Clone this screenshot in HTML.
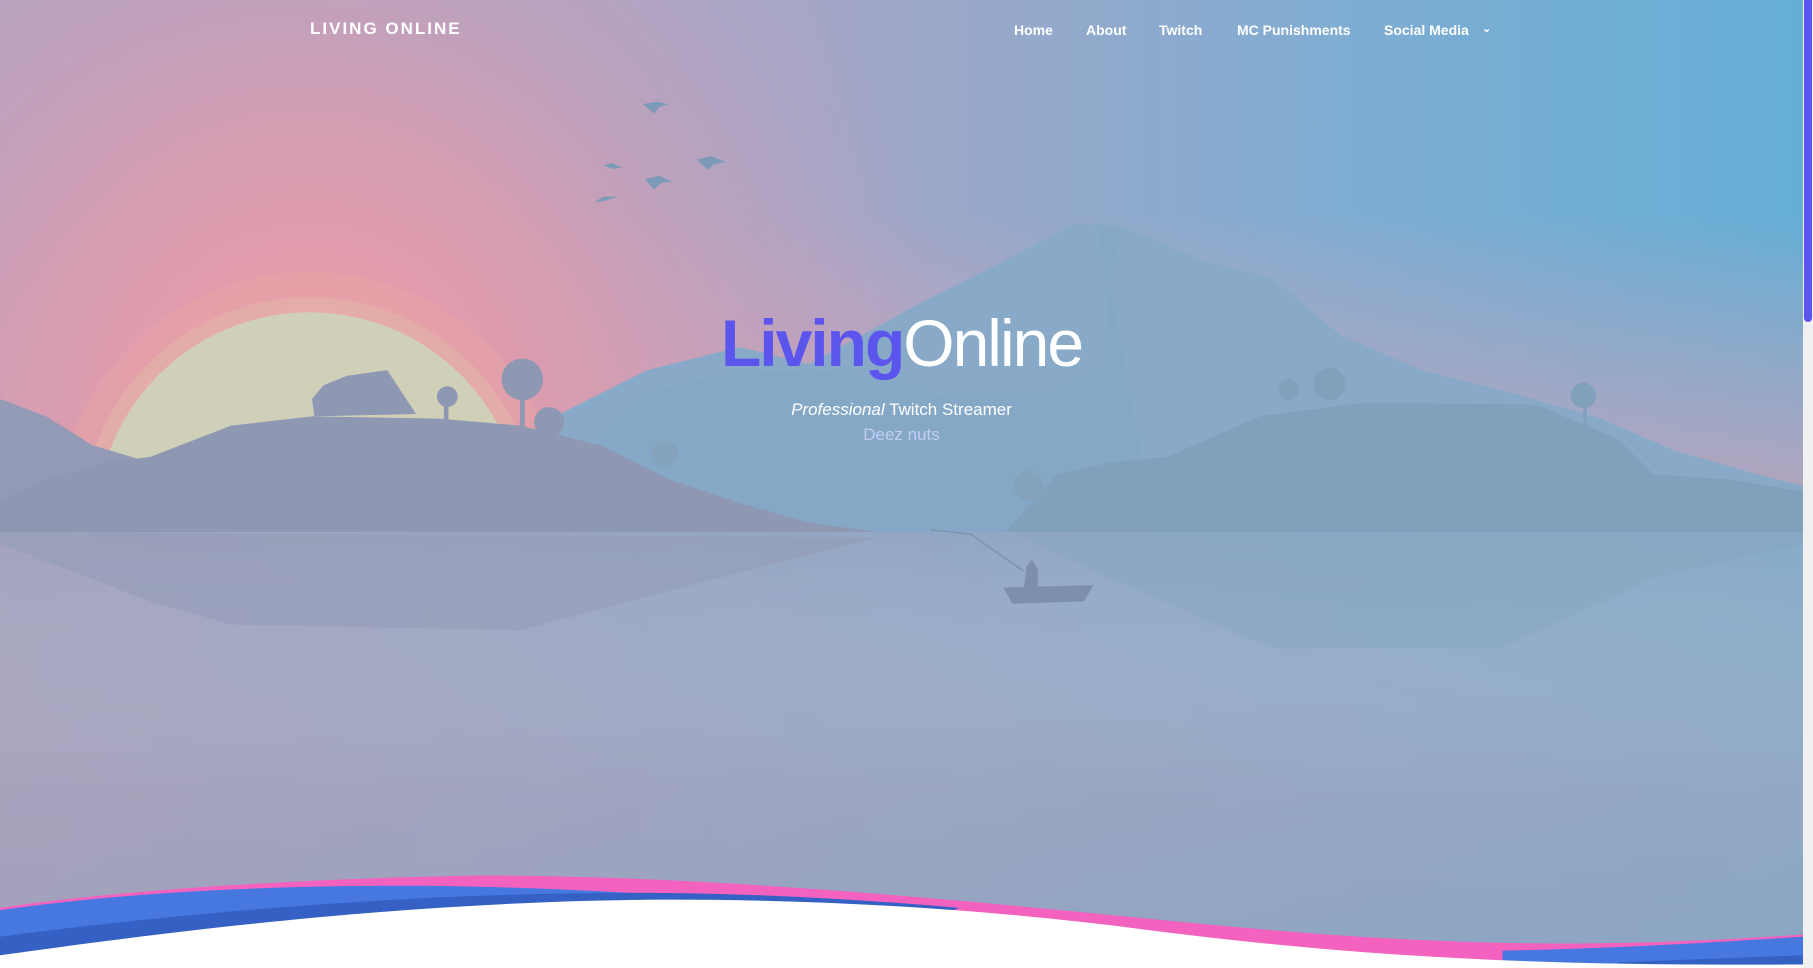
<!DOCTYPE html>
<html><head><meta charset="utf-8"><style>
html,body{margin:0;padding:0;width:1813px;height:968px;overflow:hidden;font-family:"Liberation Sans",sans-serif;}
.scene{position:absolute;left:0;top:0;width:1803px;height:968px;}
.sb{position:absolute;left:1803px;top:0;width:10px;height:968px;background:#f1f1f1;}
.sb div{position:absolute;left:1px;top:0;width:8px;height:322px;background:#5b55ee;border-radius:0 0 4px 4px;}
.logo{position:absolute;left:310px;top:19px;color:#fff;font-weight:bold;font-size:17px;letter-spacing:2px;}
.nav{position:absolute;top:22px;color:#fff;font-weight:bold;font-size:14px;}
.title{position:absolute;left:0;width:1803px;top:303px;text-align:center;font-size:66px;letter-spacing:-2px;line-height:80px;}
.title b{color:#5b55ee;font-weight:bold}
.title span{color:#fff;}
.sub{position:absolute;left:0;width:1803px;text-align:center;font-size:17px;color:#fff;}
</style></head><body>
<svg class="scene" viewBox="0 0 1560 837" preserveAspectRatio="none" xmlns="http://www.w3.org/2000/svg">
<defs>
<linearGradient id="sky" x1="0" y1="0" x2="1" y2="0">
<stop offset="0" stop-color="#b1a4c2"/><stop offset="0.45" stop-color="#a4a6c6"/><stop offset="0.75" stop-color="#7fadd2"/><stop offset="1" stop-color="#64aed6"/>
</linearGradient>
<linearGradient id="band" x1="0" y1="0" x2="0" y2="1">
<stop offset="0" stop-color="#e4a0b0" stop-opacity="0"/><stop offset="0.4" stop-color="#e4a0b0" stop-opacity="0"/><stop offset="0.9" stop-color="#e0a0b0" stop-opacity="0.6"/><stop offset="1" stop-color="#e0a0b0" stop-opacity="0.6"/>
</linearGradient>
<radialGradient id="glow" cx="270" cy="340" r="560" gradientUnits="userSpaceOnUse">
<stop offset="0" stop-color="#f09aa4"/><stop offset="0.4" stop-color="#dc9cae" stop-opacity="0.85"/><stop offset="1" stop-color="#c0a0c0" stop-opacity="0"/>
</radialGradient>
<linearGradient id="water" x1="0" y1="0" x2="1" y2="0">
<stop offset="0" stop-color="#a3a2bd"/><stop offset="0.5" stop-color="#93a7c4"/><stop offset="1" stop-color="#86aac8"/>
</linearGradient>
<linearGradient id="waterv" x1="0" y1="0" x2="0" y2="1">
<stop offset="0" stop-color="#fff" stop-opacity="0"/><stop offset="0.6" stop-color="#b5a2bb" stop-opacity="0.25"/><stop offset="1" stop-color="#9a9ab5" stop-opacity="0.2"/>
</linearGradient>
<clipPath id="c"><rect width="1560" height="460"/></clipPath>
</defs>
<rect width="1560" height="837" fill="url(#sky)"/>
<rect width="1560" height="460" fill="url(#band)"/>
<rect width="1560" height="460" fill="url(#glow)"/>
<g clip-path="url(#c)">
<circle cx="268" cy="455" r="220" fill="#e8a6a6" opacity="0.45"/>
<circle cx="268" cy="455" r="198" fill="#e2b4a8" opacity="0.6"/>
<circle cx="268" cy="455" r="185" fill="#d0d0b8"/>
</g>
<!-- mountain -->
<path d="M480,360 L560,320 L640,300 L700,315 L800,260 L860,230 L930,193 L970,195 L1040,225 L1100,240 L1160,290 L1230,320 L1290,335 L1380,360 L1450,390 L1520,410 L1560,420 L1560,460 L480,460Z" fill="#88aac8"/>
<path d="M950,195 L970,200 L960,240 L955,320 L900,345 L820,345 L780,330 L700,320 L620,325 L560,340 L520,380 L500,400 L480,460 L1000,460Z" fill="#84a6c4" opacity="0.6"/>
<!-- left hill -->
<path d="M0,345 L40,360 L80,385 L130,400 L140,460 L0,460Z" fill="#939ab5"/>
<!-- left island -->
<path d="M0,432 L40,415 L90,400 L130,395 L200,368 L270,360 L380,362 L450,368 L520,385 L580,415 L640,435 L700,452 L760,460 L0,460Z" fill="#8f98b2"/>
<path d="M272,360 L270,345 L280,333 L300,325 L335,320 L360,358Z" fill="#8f98b2"/>
<rect x="384" y="340" width="4" height="25" fill="#8f98b2"/><circle cx="387" cy="343" r="9" fill="#8f98b2"/>
<rect x="450" y="330" width="4" height="40" fill="#8f98b2"/><circle cx="452" cy="328" r="18" fill="#8f98b2"/>
<circle cx="475" cy="365" r="13" fill="#8f98b2"/>
<!-- right island -->
<path d="M870,460 L915,410 L960,400 L1010,395 L1090,360 L1180,348 L1330,350 L1400,380 L1430,410 L1500,415 L1560,425 L1560,460Z" fill="#80a0bb"/>
<rect x="1370" y="340" width="3" height="30" fill="#80a0bb"/><circle cx="1370" cy="342" r="11" fill="#80a0bb"/>
<circle cx="1150" cy="332" r="14" fill="#80a0bb"/><circle cx="1115" cy="337" r="9" fill="#80a0bb"/>
<circle cx="890" cy="420" r="13" fill="#85a2bd"/><circle cx="575" cy="392" r="11" fill="#85a2bd"/>
<!-- birds -->
<g fill="#7b9ab8"><path d="M556,90 L568,88 L578,90 L570,93 L566,98Z"/><path d="M603,138 L615,135 L628,140 L618,142 L612,147Z"/><path d="M558,155 L570,152 L582,157 L572,158 L566,164Z"/><path d="M522,143 L530,141 L538,145 L530,146Z"/><path d="M514,175 L522,170 L535,170 L522,174Z"/></g>
<!-- water -->
<rect y="460" width="1560" height="377" fill="url(#water)"/>
<rect y="460" width="1560" height="377" fill="url(#waterv)"/>
<path d="M0,470 L130,520 L200,540 L450,545 L620,500 L760,465 L0,460Z" fill="#959cb7" opacity="0.6"/>
<path d="M880,462 L960,500 L1100,560 L1300,560 L1430,500 L1560,470 L1560,460Z" fill="#86a5c0" opacity="0.5"/>
<!-- boat -->
<path d="M868,508 L946,506 L938,520 L876,522Z" fill="#7d8fad"/>
<path d="M886,508 L888,490 L893,484 L898,492 L898,508Z" fill="#7d8fad"/>
<path d="M886,494 L840,462 L805,458" stroke="#7d8fad" stroke-width="1.2" fill="none"/>
<!-- waves -->
<path d="M0,785 C100,770 250,760 415,757 C600,757 800,775 1000,795 C1200,815 1350,823 1560,808 L1560,837 L0,837Z" fill="#f462bf"/>
<path d="M0,787 C120,770 250,765 380,766 C500,768 600,775 700,782 L1000,837 L0,837Z" fill="#4678e0"/>
<path d="M1300,822 C1400,820 1480,815 1560,810 L1560,837 L1300,837Z" fill="#4678e0"/>
<path d="M0,810 C150,790 350,772 550,772 C650,772 750,778 830,785 L700,837 L0,837Z" fill="#3561c4"/>
<path d="M1400,832 L1560,826 L1560,837 L1400,837Z" fill="#3561c4"/>
<path d="M0,826 C150,805 350,780 560,778 C700,777 850,785 1000,805 C1200,830 1350,835 1560,834 L1560,837 L0,837Z" fill="#fff"/>
</svg>
<div class="sb"><div></div></div>
<div class="logo">LIVING ONLINE</div>
<div class="nav" style="left:1014px">Home</div>
<div class="nav" style="left:1086px">About</div>
<div class="nav" style="left:1159px">Twitch</div>
<div class="nav" style="left:1237px">MC Punishments</div>
<div class="nav" style="left:1384px">Social Media</div>
<div class="nav" style="left:1482px;font-size:11px;top:22px">&#8964;</div>
<div class="title"><b>Living</b><span>Online</span></div>
<div class="sub" style="top:400px"><i>Professional</i> Twitch Streamer</div>
<div class="sub" style="top:425px;color:#c3cdf5">Deez nuts</div>
</body></html>
